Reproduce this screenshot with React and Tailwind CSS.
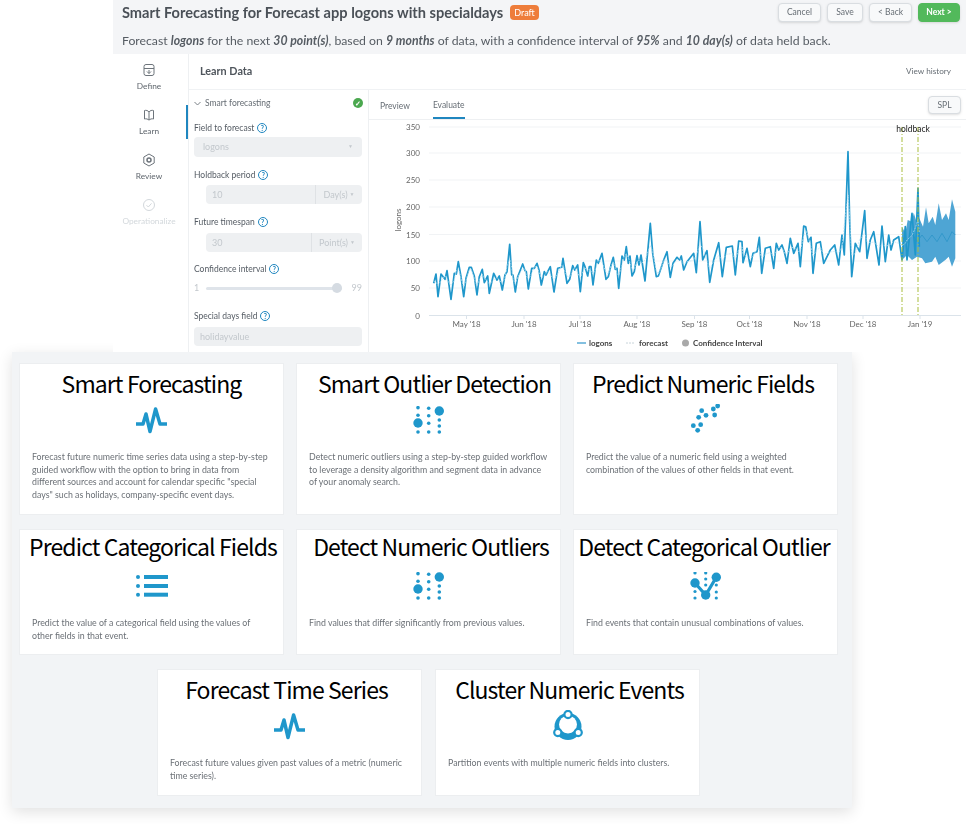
import React from 'react'

const BLUE = '#1f97cb'

// traced off the chart, [x, y] in page pixels after mapping
const partA = [[188,490],[195,462],[201,530],[210,462],[222,478],[228,452],[240,538],[250,460],[256,462],[262,425],[270,470],[278,530],[285,475],[295,442],[301,442],[310,468],[318,525],[325,470],[334,448],[340,488],[350,468],[355,520],[368,460],[378,480],[385,468],[394,510],[402,465],[408,455],[416,373],[422,465],[426,465],[433,516],[440,470],[455,432],[462,452],[466,455],[472,507],[482,445],[490,445],[498,430],[504,450],[511,495],[520,455],[525,465],[530,455],[538,440],[549,516],[560,445],[572,442],[576,415],[588,490],[596,478],[605,437],[611,450],[620,435],[628,515],[637,428],[642,440],[650,468],[655,440],[660,440],[666,495],[676,420],[682,430],[693,400],[705,478],[712,470],[720,435],[727,412],[733,448],[738,445],[743,505],[753,408],[760,420],[766,380],[772,430],[777,408],[783,468],[790,455],[798,407],[804,435],[810,405],[822,483],[838,310],[845,400],[856,470],[862,468],[870,445],[878,420]]
const partB = [[0,395],[10,472],[18,430],[30,412],[38,420],[43,408],[50,450],[60,425],[80,400],[88,458],[99,305],[107,420],[120,392],[128,487],[140,420],[155,368],[166,470],[178,382],[196,378],[205,465],[215,363],[225,365],[228,428],[240,385],[250,440],[258,400],[270,395],[277,352],[284,460],[295,385],[310,380],[320,445],[328,370],[335,390],[345,375],[352,395],[360,430],[370,355],[380,400],[393,370],[400,440],[410,318],[416,320],[424,365],[432,352],[438,460],[448,370],[460,365],[470,430],[490,390],[503,375],[515,435],[525,345],[532,405],[543,95],[548,305],[554,470],[565,370],[578,395],[593,272],[600,415],[610,360],[620,335],[636,435],[645,318],[655,425],[665,345],[672,390],[680,360],[695,350],[705,420],[715,320],[720,420],[735,280],[745,405],[753,205],[757,380]]
const band = [[705,320],[715,340],[722,300],[735,305],[740,278],[750,310],[757,295],[768,320],[777,262],[785,310],[797,290],[805,315],[815,250],[825,300],[837,280],[845,300],[855,238],[865,275],[865,415],[855,440],[845,410],[835,420],[815,435],[805,410],[795,425],[775,430],[765,415],[750,410],[735,420],[720,405],[705,420]]
const mid = [[705,350],[720,370],[735,340],[750,365],[765,345],[780,365],[795,345],[810,365],[825,340],[840,365],[855,335],[865,345]]

const mapA = ([x, y]) => [370 + x / 3, 120 + y / 3]
const mapB = ([x, y]) => [666 + x / 3, 120 + y / 3]
const series = [...partA.map(mapA), ...partB.map(mapB)]
const toPts = (list) => list.map((p) => p[0].toFixed(1) + ',' + p[1].toFixed(1)).join(' ')
const smooth = series.map((p, i) => {
    const a = series[Math.max(0, i - 1)]
    const b = series[Math.min(series.length - 1, i + 1)]
    return [p[0], (a[1] + p[1] * 2 + b[1]) / 4]
})

const yTicks = [[350, 127], [300, 153], [250, 180], [200, 207], [150, 234.5], [100, 261], [50, 288], [0, 315.5]]
const months = [["May '18", 465.5], ["Jun '18", 523], ["Jul '18", 579], ["Aug '18", 636], ["Sep '18", 693.5], ["Oct '18", 748.5], ["Nov '18", 806], ["Dec '18", 862], ["Jan '19", 919]]

const Chart = () => (
    <svg viewBox="368 120 598 232" className="w-[598px] h-[232px] block" style={{ fontFamily: 'Lato, sans-serif' }}>
        {yTicks.map(([v, y]) => (
            <g key={v}>
                <line x1="428" x2="960" y1={y} y2={y} stroke={v === 0 ? '#dbe3ea' : '#f1f3f5'} strokeWidth="1" />
                <text x="419" y={y + 3} textAnchor="end" fontSize="8" fill="#666">{v}</text>
            </g>
        ))}
        {months.map(([m, x]) => (
            <g key={m}>
                <line x1={x} x2={x} y1="315" y2="319" stroke="#dbe3ea" />
                <text x={x} y="327" textAnchor="middle" fontSize="8" fill="#666">{m}</text>
            </g>
        ))}
        <text transform="translate(400 220) rotate(-90)" textAnchor="middle" fontSize="8" fill="#666">logons</text>
        <polygon points={toPts(band.map(mapB))} fill="#4ea5d4" />
        <polyline points={toPts(mid.map(mapB))} fill="none" stroke="#2b94c8" strokeWidth="0.8" />
        <polyline points={toPts(series)} fill="none" stroke={BLUE} strokeWidth="1.700" strokeLinejoin="round" />
        <polyline points={toPts(smooth)} fill="none" stroke="#bfe2f2" strokeWidth="0.7" strokeDasharray="2 1" />
        <line x1="901" x2="901" y1="127" y2="315" stroke="#a8bd3c" strokeWidth="1" strokeDasharray="5 2 1 2" />
        <line x1="917" x2="917" y1="127" y2="315" stroke="#a8bd3c" strokeWidth="1" strokeDasharray="5 2 1 2" />
        <text x="912" y="132" textAnchor="middle" fontSize="8.500" fill="#222">holdback</text>

        <line x1="576" x2="585" y1="343" y2="343" stroke="#5aabd6" strokeWidth="1.500" />
        <text x="588" y="346" fontSize="8" fontWeight="700" fill="#444">logons</text>
        <line x1="625" x2="634" y1="343" y2="343" stroke="#c8d4da" strokeWidth="1" strokeDasharray="2 1" />
        <text x="638" y="346" fontSize="8" fontWeight="700" fill="#444">forecast</text>
        <circle cx="684.500" cy="343" r="3.500" fill="#a9a9a9" />
        <text x="692" y="346" fontSize="8" fontWeight="700" fill="#444">Confidence Interval</text>
    </svg>
)

const Help = () => (
    <span className="inline-flex w-[10px] h-[10px] ml-[3px] rounded-full border-[1.5px] border-[#1f86bf] text-[#1f86bf] text-[7px] font-bold leading-none items-center justify-center">?</span>
)

const FieldLabel = ({ children, className }) => (
    <div className={`flex items-center h-[14px] text-[8.5px] text-[#555c64] ${className}`}>{children}<Help /></div>
)

const Stepper = ({ value, unit, unitWidth, className }) => (
    <div className={`flex h-[19px] ml-[12px] w-[156px] rounded-sm bg-[#eef0f2] text-[9px] text-[#c3c8cd] ${className}`}>
        <div className="flex-1 flex items-center pl-[6px]">{value}</div>
        <div className={`flex items-center justify-center gap-[2px] border-l border-[#dfe2e5] ${unitWidth}`}>{unit}<span className="text-[5px]">▼</span></div>
    </div>
)

const NavItem = ({ label, active, muted, children }) => (
    <div className={`h-[34px] w-full flex flex-col items-center pt-[3px] pr-[1px] border-r-2 ${active ? 'border-[#1f86bf]' : 'border-transparent'}`}>
        {children}
        <div className={`mt-[3.500px] text-[8.300px] leading-[10px] ${muted ? 'text-[#d3d8dc]' : 'text-[#5f666d]'}`}>{label}</div>
    </div>
)

const TopButton = ({ children, className }) => (
    <button className={`h-[19px] rounded-sm border border-[#d9dde1] bg-[#f8f9fa] text-[8.5px] text-[#666d74] shadow-sm ${className}`}>{children}</button>
)

const App_Base = () => (
    <div className="ml-[113px] h-[352px] overflow-hidden bg-white blur-[0.4px]" style={{ fontFamily: 'Lato, sans-serif' }}>
        <div className="h-[54px] bg-[#f4f5f7] pl-[9px] pr-[6px]">
            <div className="flex items-center h-[28px] pb-[3px]">
                <div className="text-[14.600px] font-bold text-[#4a5057]">Smart Forecasting for Forecast app logons with specialdays</div>
                <div className="ml-[7px] px-[4px] h-[15px] flex items-center rounded-sm bg-[#ee7d3b] text-white text-[9px]">Draft</div>
                <div className="ml-auto flex gap-[6px]">
                    <TopButton className="w-[43px]">Cancel</TopButton>
                    <TopButton className="w-[36px]">Save</TopButton>
                    <TopButton className="w-[43px]">&lt; Back</TopButton>
                    <TopButton className="w-[42px] !bg-[#52b95b] !border-[#52b95b] !text-white font-bold">Next &gt;</TopButton>
                </div>
            </div>
            <div className="mt-[5px] text-[12.250px] leading-[16px] text-[#565c63] whitespace-nowrap">
                Forecast <b><i>logons</i></b> for the next <b><i>30 point(s)</i></b>, based on <b><i>9 months</i></b> of data, with a confidence interval of <b><i>95%</i></b> and <b><i>10 day(s)</i></b> of data held back.
            </div>
        </div>
        <div className="flex h-[298px]">
            <div className="w-[75px] shrink-0 flex flex-col gap-[11px] pt-[6px]">
                <NavItem label="Define">
                    <svg width="14" height="14" viewBox="0 0 14 14" fill="none" stroke="#6d747b" strokeWidth="1">
                        <rect x="2" y="1.500" width="10" height="11" rx="2" />
                        <path d="M2 5.500h10M5 8.500l2 2 2-2M7 7v3.500" />
                    </svg>
                </NavItem>
                <NavItem label="Learn" active>
                    <svg width="14" height="14" viewBox="0 0 14 14" fill="none" stroke="#6d747b" strokeWidth="1">
                        <path d="M7 4C6 2.500 4 2 2.500 2.500V11c1.500-.5 3.500 0 4.500 1.200 1-1.200 3-1.700 4.500-1.200V2.500C10 2 8 2.500 7 4zM7 4v8" />
                    </svg>
                </NavItem>
                <NavItem label="Review">
                    <svg width="14" height="14" viewBox="0 0 14 14" fill="none" stroke="#6d747b" strokeWidth="1">
                        <path d="M7 1l5.200 3v6L7 13l-5.200-3V4z" />
                        <circle cx="7" cy="7" r="2" strokeWidth="1.500" />
                    </svg>
                </NavItem>
                <NavItem label="Operationalize" muted>
                    <svg width="14" height="14" viewBox="0 0 14 14" fill="none" stroke="#d3d8dc" strokeWidth="1">
                        <circle cx="7" cy="7" r="5.500" />
                        <path d="M4.500 7.200l1.800 1.800 3.200-3.600" />
                    </svg>
                </NavItem>
            </div>
            <div className="flex-1 border-l border-[#eef0f2] flex flex-col">
                <div className="h-[36px] shrink-0 flex items-center justify-between pl-[11px] pr-[16px] border-b border-[#f0f2f4]">
                    <div className="text-[10.800px] font-bold text-[#4f555c]">Learn Data</div>
                    <div className="text-[8.200px] text-[#666d74]">View history</div>
                </div>
                <div className="flex flex-1">
                    <div className="w-[180px] shrink-0 border-r border-[#eef0f2] pl-[5px]">
                        <div className="h-[26px] w-[169px] flex items-center text-[8.5px] text-[#666d74]">
                            <svg width="7" height="5" viewBox="0 0 7 5" fill="none" stroke="#7a8187" strokeWidth="1" className="ml-[0px] mr-[4px]"><path d="M.5 1l3 3 3-3" /></svg>
                            Smart forecasting
                            <span className="ml-auto flex w-[10px] h-[10px] rounded-full bg-[#4ba84f] text-white text-[7px] font-bold items-center justify-center">✓</span>
                        </div>
                        <FieldLabel className="mt-[5px]">Field to forecast</FieldLabel>
                        <div className="mt-[2px] h-[20px] w-[168px] rounded-sm bg-[#eef0f2] flex items-center justify-between px-[9px] text-[9px] text-[#c3c8cd]">logons<span className="text-[5px]">▼</span></div>
                        <FieldLabel className="mt-[11px]">Holdback period</FieldLabel>
                        <Stepper value="10" unit="Day(s)" unitWidth="w-[47px]" className="mt-[3px]" />
                        <FieldLabel className="mt-[11px]">Future timespan</FieldLabel>
                        <Stepper value="30" unit="Point(s)" unitWidth="w-[51px]" className="mt-[4px]" />
                        <FieldLabel className="mt-[10px]">Confidence interval</FieldLabel>
                        <div className="mt-[6px] h-[12px] flex items-center text-[9px] text-[#c3c8cd] w-[168px]">
                            <span className="w-[12px]">1</span>
                            <div className="w-[136px] h-[3px] rounded-full bg-[#dfe4ea] flex items-center justify-end">
                                <div className="w-[10px] h-[10px] rounded-full bg-[#d5dbe2]"></div>
                            </div>
                            <span className="ml-auto">99</span>
                        </div>
                        <FieldLabel className="mt-[15px]">Special days field</FieldLabel>
                        <div className="mt-[4px] h-[19px] w-[168px] rounded-sm bg-[#eef0f2] flex items-center px-[6px] text-[9px] text-[#c3c8cd]">holidayvalue</div>
                    </div>
                    <div className="flex-1 flex flex-col min-w-0">
                        <div className="h-[30px] shrink-0 flex items-stretch pl-[11px] pr-[6px] border-b border-[#eef0f2] text-[8.5px] text-[#666d74]">
                            <div className="flex items-center pt-[3px]">Preview</div>
                            <div className="ml-[23px] flex items-center pt-[3px] border-b-2 border-[#1f86bf]">Evaluate</div>
                            <button className="ml-auto mt-[6px] h-[18px] w-[33px] rounded-sm border border-[#d9dde1] bg-[#f8f9fa] text-[8.5px] text-[#666d74] shadow-sm">SPL</button>
                        </div>
                        <Chart />
                    </div>
                </div>
            </div>
        </div>
    </div>
)

const PulseIcon = () => (
    <svg width="31" height="27" viewBox="0 0 31 27" fill="none" stroke={BLUE} strokeWidth="3.500" strokeLinejoin="round">
        <path d="M0 17H7L10 7 14 24.500 19.600 2 24 17H31" />
    </svg>
)

const DotsIcon = () => (
    <svg width="32" height="28" viewBox="0 0 32 28" fill={BLUE}>
        <circle cx="5" cy="17" r="4.700" />
        <circle cx="26.300" cy="5" r="4.700" />
        {[[5, 1.700], [5, 9.300], [5, 26], [15.700, 2.300], [15.700, 9.700], [15.700, 17.300], [15.700, 26], [26.300, 14], [26.300, 20], [26.300, 26]].map(([x, y]) => (
            <circle key={x + '-' + y} cx={x} cy={y} r="1.800" />
        ))}
    </svg>
)

const ScatterIcon = () => (
    <svg width="32" height="32" viewBox="0 0 32 32" fill={BLUE}>
        {[[441, 176], [428, 185], [432, 203], [393, 190], [406, 204], [384, 210], [390, 232], [368, 235], [381, 249]].map(([x, y]) => (
            <circle key={x} cx={(x - 358) / 3} cy={(y - 170) / 3} r="2.400" />
        ))}
    </svg>
)

const ListIcon = () => (
    <svg width="32" height="24" viewBox="0 0 32 24" fill={BLUE}>
        <circle cx="2" cy="3" r="2" />
        <circle cx="2" cy="12" r="2" />
        <circle cx="2" cy="20.700" r="2" />
        <rect x="8" y="1" width="24" height="4" />
        <rect x="8" y="10" width="24" height="4" />
        <rect x="8" y="18.700" width="24" height="4" />
    </svg>
)

const CategoryIcon = () => (
    <svg width="32" height="28" viewBox="0 0 32 28" fill={BLUE}>
        <circle cx="5" cy="11" r="4.700" />
        <circle cx="26.300" cy="5.300" r="4.700" />
        <circle cx="15.700" cy="23" r="4.700" />
        <path d="M5 11L15.700 23 26.300 5.300" fill="none" stroke={BLUE} strokeWidth="3.200" />
        {[[5, 1], [5, 19.500], [5, 26], [15.700, 1], [15.700, 7], [15.700, 13], [26.300, 13], [26.300, 20], [26.300, 26]].map(([x, y]) => (
            <circle key={x + '-' + y} cx={x} cy={y} r="1.600" />
        ))}
    </svg>
)

const ClusterIcon = () => (
    <svg width="32" height="32" viewBox="0 0 32 32" fill="none" stroke={BLUE}>
        <circle cx="16" cy="16.500" r="13.500" fill={BLUE} stroke="none" />
        <circle cx="16" cy="14.500" r="9" fill="#fff" stroke="none" />
        <circle cx="16" cy="4.500" r="3.600" fill="#fff" strokeWidth="2.200" />
        <circle cx="5.800" cy="22.500" r="3.600" fill="#fff" strokeWidth="2.200" />
        <circle cx="26.200" cy="22.500" r="3.600" fill="#fff" strokeWidth="2.200" />
    </svg>
)

const Card = ({ title, icon, lines, height, titleClass = 'pt-[4px]' }) => (
    <div className={`w-[265px] ${height} shrink-0 bg-white border border-[#eceef0] flex flex-col items-center`}>
        <div className={`h-[40px] shrink-0 ${titleClass} text-[23px] tracking-[-0.9px] leading-[30px] text-black whitespace-nowrap`} style={{ fontFamily: '"Noto Sans CJK KR", "Open Sans", sans-serif' }}>{title}</div>
        <div className="h-[32px] shrink-0 flex items-center justify-center">{icon}</div>
        <div className="mt-[15px] w-full px-[12px] text-[8.800px] leading-[12.700px] text-[#6b7076] blur-[0.2px]" style={{ fontFamily: 'Lato, sans-serif' }}>
            {lines.map((l) => <div key={l} className="whitespace-nowrap">{l}</div>)}
        </div>
    </div>
)

const App = () => {
    return (
        <div className="w-[966px] h-[824px] overflow-hidden bg-white">
            <App_Base />
            <div className="ml-[12px] w-[840px] h-[456px] bg-[#f2f4f6] shadow-[0_4px_14px_rgba(0,0,0,0.12)] pl-[7px] pt-[11px]">
                <div className="w-[819px] flex flex-col gap-[14px]">
                    <div className="flex justify-between">
                        <Card height="h-[152px]" title="Smart Forecasting" icon={<PulseIcon />} lines={['Forecast future numeric time series data using a step-by-step', 'guided workflow with the option to bring in data from', 'different sources and account for calendar specific "special', 'days" such as holidays, company-specific event days.']} />
                        <Card height="h-[152px]" titleClass="pt-[4px] pl-[12px]" title="Smart Outlier Detection" icon={<DotsIcon />} lines={['Detect numeric outliers using a step-by-step guided workflow', 'to leverage a density algorithm and segment data in advance', 'of your anomaly search.']} />
                        <Card height="h-[152px]" titleClass="pt-[4px] pr-[5px]" title="Predict Numeric Fields" icon={<ScatterIcon />} lines={['Predict the value of a numeric field using a weighted', 'combination of the values of other fields in that event.']} />
                    </div>
                    <div className="flex justify-between">
                        <Card height="h-[126px]" titleClass="pt-[1px] pl-[3px]" title="Predict Categorical Fields" icon={<ListIcon />} lines={['Predict the value of a categorical field using the values of', 'other fields in that event.']} />
                        <Card height="h-[126px]" titleClass="pt-[1px] pl-[5px]" title="Detect Numeric Outliers" icon={<DotsIcon />} lines={['Find values that differ significantly from previous values.']} />
                        <Card height="h-[126px]" titleClass="pt-[1px] pr-[3px]" title="Detect Categorical Outlier" icon={<CategoryIcon />} lines={['Find events that contain unusual combinations of values.']} />
                    </div>
                    <div className="flex justify-center gap-[13px]">
                        <Card height="h-[127px]" titleClass="pt-[4px] pr-[6px]" title="Forecast Time Series" icon={<PulseIcon />} lines={['Forecast future values given past values of a metric (numeric', 'time series).']} />
                        <Card height="h-[127px]" titleClass="pt-[4px] pl-[4px]" title="Cluster Numeric Events" icon={<ClusterIcon />} lines={['Partition events with multiple numeric fields into clusters.']} />
                    </div>
                </div>
            </div>
        </div>
    )
}

export default App
